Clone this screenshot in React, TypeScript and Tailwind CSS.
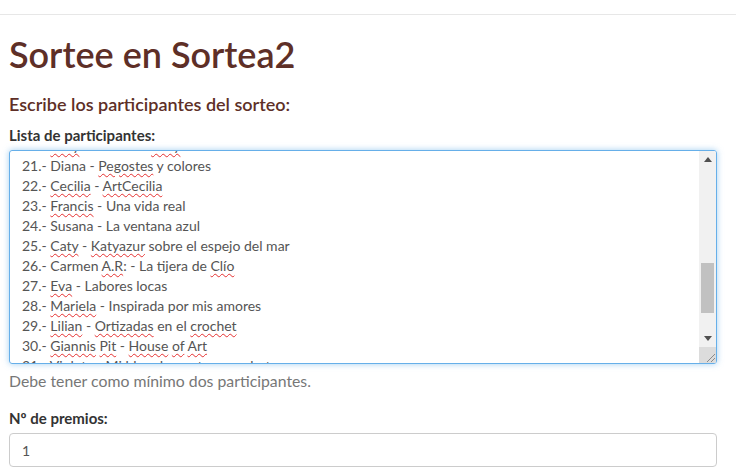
import React from "react";

type Part = { t: string; bad?: boolean };

const lines: Part[][] = [
  [{ t: "20.- " }, { t: "Rosy", bad: true }, { t: " - Punto de " }, { t: "Rosy", bad: true }],
  [{ t: "21.- Diana - " }, { t: "Pegostes", bad: true }, { t: " y colores" }],
  [{ t: "22.- " }, { t: "Cecilia", bad: true }, { t: " - " }, { t: "ArtCecilia", bad: true }],
  [{ t: "23.- " }, { t: "Francis", bad: true }, { t: " - Una vida real" }],
  [{ t: "24.- Susana - La ventana azul" }],
  [{ t: "25.- " }, { t: "Caty", bad: true }, { t: " - " }, { t: "Katyazur", bad: true }, { t: " sobre el espejo del mar" }],
  [{ t: "26.- Carmen " }, { t: "A.R", bad: true }, { t: ": - La tijera de " }, { t: "Clío", bad: true }],
  [{ t: "27.- " }, { t: "Eva", bad: true }, { t: " - Labores locas" }],
  [{ t: "28.- " }, { t: "Mariela", bad: true }, { t: " - Inspirada por mis amores" }],
  [{ t: "29.- " }, { t: "Lilian", bad: true }, { t: " - " }, { t: "Ortizadas", bad: true }, { t: " en el " }, { t: "crochet", bad: true }],
  [{ t: "30.- " }, { t: "Giannis", bad: true }, { t: " " }, { t: "Pit", bad: true }, { t: " - " }, { t: "House", bad: true }, { t: " " }, { t: "of", bad: true }, { t: " " }, { t: "Art", bad: true }],
  [{ t: "31.- Violeta - Mi blog de punto y crochet" }],
];

function Scrollbar() {
  return (
    <div className="w-[17px] flex flex-col bg-[#f1f1f1]">
      <div className="h-[17px] flex items-center justify-center">
        <svg width="8" height="5" viewBox="0 0 8 5">
          <path d="M0 5 L4 0 L8 5 Z" fill="#505050" />
        </svg>
      </div>
      <div className="flex-1 flex flex-col px-[2px]">
        <div className="h-[95px]" />
        <div className="h-[50px] bg-[#c1c1c1]" />
      </div>
      <div className="h-[17px] flex items-center justify-center">
        <svg width="8" height="5" viewBox="0 0 8 5">
          <path d="M0 0 L4 5 L8 0 Z" fill="#505050" />
        </svg>
      </div>
      <div className="h-[16px] bg-[#dcdcdc] flex items-end justify-end">
        <svg width="12" height="12" viewBox="0 0 12 12">
          <path d="M11 3 L3 11 M11 7 L7 11" stroke="#8a8a8a" strokeWidth="1" />
        </svg>
      </div>
    </div>
  );
}

export default function App() {
  return (
    <div className="min-h-[476px] bg-white font-[Lato,'Liberation_Sans',sans-serif] text-[14px] text-[#333]">
      {/* navbar edge */}
      <div className="h-[15px] border-b border-[#e7e7e7]" />

      <div className="pl-[9px] pr-[19px]">
        <h1 className="mt-[19px] text-[36px] leading-[40px] font-semibold text-[#5e2f27]">
          Sortee en Sortea2
        </h1>
        <h4 className="mt-[20px] text-[18px] leading-[20px] font-semibold text-[#5e2f27]">
          Escribe los participantes del sorteo:
        </h4>

        <label className="block mt-[11px] mb-[5px] text-[15px] leading-[20px] font-bold text-[#333]">
          Lista de participantes:
        </label>

        {/* textarea look-alike, scrolled to line 21 */}
        <div className="h-[214px] flex border border-[#66afe9] rounded-[3px] shadow-[0_0_6px_rgba(102,175,233,0.6)] overflow-hidden">
          <div className="flex-1 overflow-hidden pl-[12px]">
            <div className="-mt-[15px]">
              {lines.map((l, i) => (
                <div key={i} className="h-[20px] leading-[20px] text-[14px] text-[#555] whitespace-nowrap">
                  {l.map((p, j) =>
                    p.bad ? (
                      <span key={j} className="underline decoration-wavy decoration-[#e53030] decoration-1 underline-offset-[2px]">
                        {p.t}
                      </span>
                    ) : (
                      <span key={j}>{p.t}</span>
                    )
                  )}
                </div>
              ))}
            </div>
          </div>
          <Scrollbar />
        </div>

        <p className="mt-[6px] text-[15.8px] leading-[22px] text-[#777]">
          Debe tener como mínimo dos participantes.
        </p>

        <label className="block mt-[16px] mb-[5px] text-[15px] leading-[20px] font-bold text-[#333]">
          Nº de premios:
        </label>
        <div className="h-[34px] flex items-center px-[12px] border border-[#ccc] rounded-[4px] text-[14px] text-[#555]">
          1
        </div>
      </div>
    </div>
  );
}
